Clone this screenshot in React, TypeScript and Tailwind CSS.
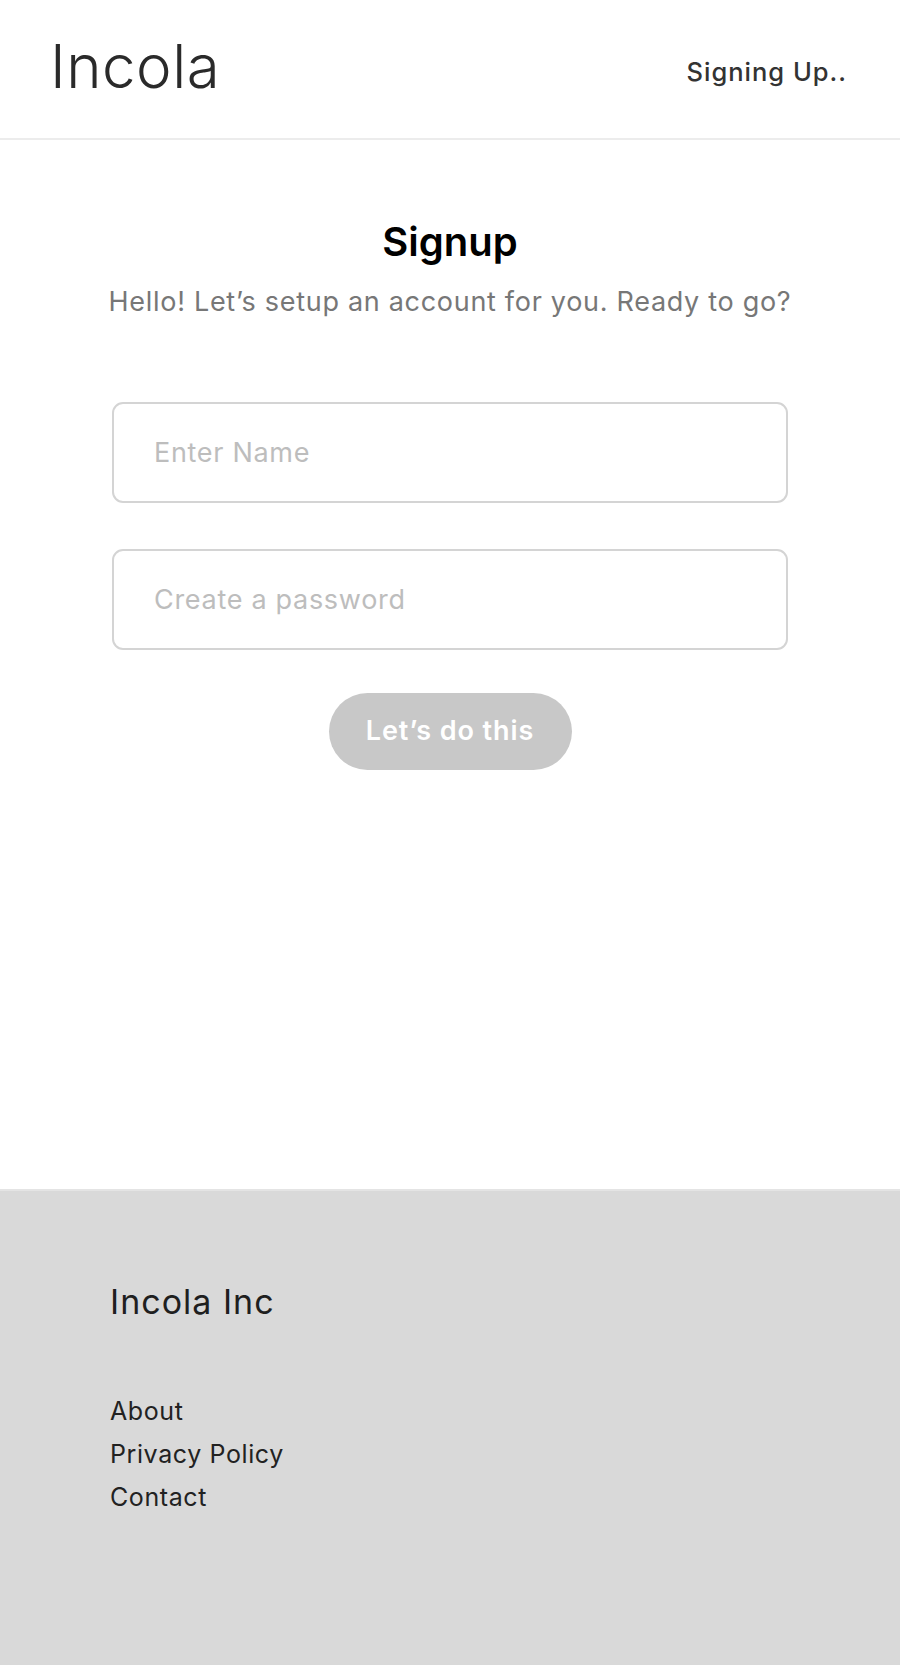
export default function App() {
  return (
    <div className="flex min-h-[1665px] flex-col bg-white font-['Inter',sans-serif] text-[#1a1a1a]">
      <header className="flex h-[140px] items-center justify-between border-b-2 border-[#ececec] pl-[50px] pr-[53px]">
        <span className="-mt-[6px] text-[60px] font-light leading-none tracking-[0.5px] text-[#2a2a2a]">Incola</span>
        <span className="mt-[7px] text-[25.5px] font-medium tracking-[1px] text-[#333]">Signing Up..</span>
      </header>

      <main className="flex flex-1 flex-col items-center pt-[82px]">
        <h1 className="text-[40px] font-semibold leading-none text-black">Signup</h1>
        <p className="mt-[26px] text-[27px] leading-none tracking-[0.7px] text-[#777]">
          Hello! Let’s setup an account for you. Ready to go?
        </p>

        <form className="mt-[87px] flex w-[676px] flex-col gap-[46px]" onSubmit={(e) => e.preventDefault()}>
          <input
            type="text"
            placeholder="Enter Name"
            className="h-[101px] w-full rounded-[11px] border-2 border-[#d4d4d4] px-[40px] text-[27px] tracking-[0.7px] outline-none placeholder:text-[#bdbdbd]"
          />
          <input
            type="password"
            placeholder="Create a password"
            className="h-[101px] w-full rounded-[11px] border-2 border-[#d4d4d4] px-[40px] text-[27px] tracking-[0.7px] outline-none placeholder:text-[#bdbdbd]"
          />
          <button
            type="submit"
            disabled
            className="-mt-[3px] mx-auto h-[77px] w-[243px] rounded-full bg-[#c8c8c8] text-[27px] font-semibold tracking-[0.9px] text-white"
          >
            Let’s do this
          </button>
        </form>
      </main>

      <footer className="h-[476px] border-t-2 border-[#e4e4e4] bg-[#d9d9d9] px-[110px] pt-[94px]">
        <p className="text-[34px] leading-none tracking-[1px] text-[#1f1f1f]">Incola Inc</p>
        <ul className="mt-[79px] flex flex-col gap-[16px] text-[25px] leading-[27px] tracking-[0.6px] text-[#222]">
          <li>About</li>
          <li>Privacy Policy</li>
          <li>Contact</li>
        </ul>
      </footer>
    </div>
  );
}
